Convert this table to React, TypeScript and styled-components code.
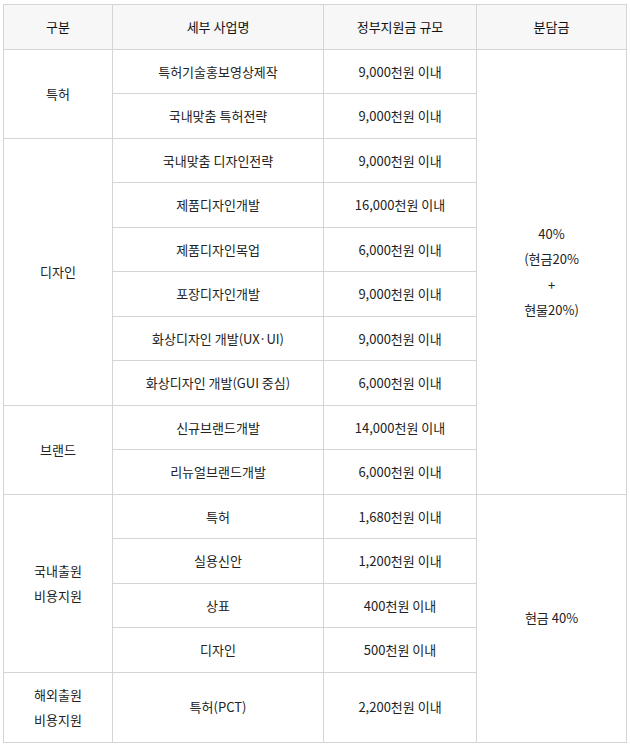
import React from "react";
import styled, { createGlobalStyle } from "styled-components";

const GlobalStyle = createGlobalStyle`
  body {
    margin: 0;
    background: #fff;
    font-family: "Noto Sans CJK KR", "Noto Sans", sans-serif;
    color: #222;
  }
`;

interface RowType {
  group?: { label: string[]; span: number };
  name: string;
  amount: string;
  share?: { label: string[]; span: number };
}

const rows: RowType[] = [
  {
    group: { label: ["특허"], span: 2 },
    name: "특허기술홍보영상제작",
    amount: "9,000천원 이내",
    share: { label: ["40%", "(현금20%", "+", "현물20%)"], span: 10 },
  },
  { name: "국내맞춤 특허전략", amount: "9,000천원 이내" },
  {
    group: { label: ["디자인"], span: 6 },
    name: "국내맞춤 디자인전략",
    amount: "9,000천원 이내",
  },
  { name: "제품디자인개발", amount: "16,000천원 이내" },
  { name: "제품디자인목업", amount: "6,000천원 이내" },
  { name: "포장디자인개발", amount: "9,000천원 이내" },
  { name: "화상디자인 개발(UX·UI)", amount: "9,000천원 이내" },
  { name: "화상디자인 개발(GUI 중심)", amount: "6,000천원 이내" },
  {
    group: { label: ["브랜드"], span: 2 },
    name: "신규브랜드개발",
    amount: "14,000천원 이내",
  },
  { name: "리뉴얼브랜드개발", amount: "6,000천원 이내" },
  {
    group: { label: ["국내출원", "비용지원"], span: 4 },
    name: "특허",
    amount: "1,680천원 이내",
    share: { label: ["현금 40%"], span: 5 },
  },
  { name: "실용신안", amount: "1,200천원 이내" },
  { name: "상표", amount: "400천원 이내" },
  { name: "디자인", amount: "500천원 이내" },
  {
    group: { label: ["해외출원", "비용지원"], span: 1 },
    name: "특허(PCT)",
    amount: "2,200천원 이내",
  },
];

function Lines({ label }: { label: string[] }) {
  return (
    <>
      {label.map((line, i) => (
        <Line key={i}>{line}</Line>
      ))}
    </>
  );
}

function App() {
  return (
    <Wrap>
      <GlobalStyle />
      <Table>
        <colgroup>
          <col style={{ width: 109 }} />
          <col style={{ width: 211 }} />
          <col style={{ width: 153 }} />
          <col style={{ width: 150 }} />
        </colgroup>
        <thead>
          <tr>
            <Th>구분</Th>
            <Th>세부 사업명</Th>
            <Th>정부지원금 규모</Th>
            <Th>분담금</Th>
          </tr>
        </thead>
        <tbody>
          {rows.map((row, i) => (
            <tr key={i}>
              {row.group && (
                <Td rowSpan={row.group.span}>
                  <Lines label={row.group.label} />
                </Td>
              )}
              <Td>{row.name}</Td>
              <Td>{row.amount}</Td>
              {row.share && (
                <Td rowSpan={row.share.span}>
                  <Lines label={row.share.label} />
                </Td>
              )}
            </tr>
          ))}
        </tbody>
      </Table>
    </Wrap>
  );
}

const Wrap = styled.div`
  padding: 4px 3px;
`;

const Table = styled.table`
  width: 623px;
  border-collapse: collapse;
  table-layout: fixed;
  font-size: 13px;
  line-height: 25.5px;
  text-align: center;
`;

const Th = styled.th`
  padding: 9px 4px;
  background: #f7f7f7;
  border: 1px solid #d5d5d5;
  font-weight: normal;
  color: #111;
`;

const Td = styled.td`
  padding: 9px 4px;
  border: 1px solid #d5d5d5;
  vertical-align: middle;
  color: #222;
`;

const Line = styled.div`
  display: block;
`;

export default App;
